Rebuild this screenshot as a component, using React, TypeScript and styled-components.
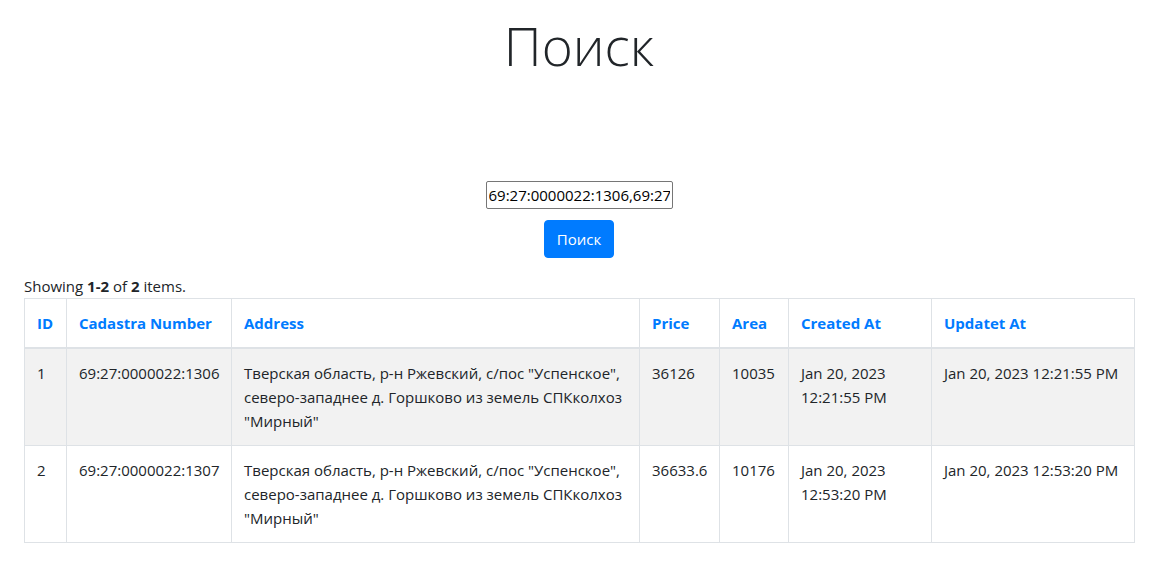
import React from "react";
import styled, { createGlobalStyle } from "styled-components";

const GlobalStyle = createGlobalStyle`
  html, body {
    margin: 0;
    padding: 0;
    background: #fff;
  }
  body {
    font-family: "Open Sans", "Noto Sans", sans-serif;
    font-size: 16px;
    line-height: 1.5;
    color: #212529;
  }
  * { box-sizing: border-box; }
`;

const Page = styled.div`
  padding: 0 32px 0 24px;
`;

const Title = styled.h1`
  margin: 0;
  padding-top: 14px;
  height: 78px;
  text-align: center;
  font-size: 53px;
  font-weight: 300;
  line-height: 64px;
  color: #212529;
`;

const SearchForm = styled.form`
  display: flex;
  flex-direction: column;
  align-items: center;
  gap: 11px;
  margin-top: 103px;
`;

const Input = styled.input`
  width: 187px;
  height: 28px;
  padding: 1px 2px;
  border: 1px solid #767676;
  border-radius: 2px;
  font-family: inherit;
  font-size: 15px;
  color: #000;
  outline: none;
`;

const Button = styled.button`
  height: 38px;
  padding: 6px 12px;
  background: #007bff;
  color: #fff;
  border: 1px solid #007bff;
  border-radius: 4px;
  font-family: inherit;
  font-size: 15px;
  line-height: 1.5;
  cursor: pointer;
`;

const Summary = styled.div`
  margin-top: 16px;
  font-size: 15px;
  line-height: 24px;
`;

const Table = styled.table`
  width: 1110px;
  border-collapse: collapse;
  table-layout: fixed;
  font-size: 15px;
`;

const Th = styled.th`
  padding: 12px;
  border: 1px solid #dee2e6;
  border-bottom: 2px solid #dee2e6;
  text-align: left;
  vertical-align: bottom;
  font-weight: 700;
  color: #007bff;
  line-height: 24px;
`;

const Row = styled.tr<{ $striped?: boolean }>`
  background: ${(p) => (p.$striped ? "#f2f2f2" : "#fff")};
`;

const Td = styled.td`
  padding: 12px;
  border: 1px solid #dee2e6;
  vertical-align: top;
  line-height: 24px;
`;

const widths = [42, 165, 408, 80, 69, 143, 203];
const headers = ["ID", "Cadastra Number", "Address", "Price", "Area", "Created At", "Updatet At"];

const address =
  'Тверская область, р-н Ржевский, с/пос "Успенское", северо-западнее д. Горшково из земель СПКколхоз "Мирный"';

const rows = [
  {
    id: "1",
    num: "69:27:0000022:1306",
    price: "36126",
    area: "10035",
    created: "Jan 20, 2023 12:21:55 PM",
    updated: "Jan 20, 2023 12:21:55 PM",
  },
  {
    id: "2",
    num: "69:27:0000022:1307",
    price: "36633.6",
    area: "10176",
    created: "Jan 20, 2023 12:53:20 PM",
    updated: "Jan 20, 2023 12:53:20 PM",
  },
];

export default function App() {
  return (
    <>
      <GlobalStyle />
      <Page>
        <Title>Поиск</Title>
        <SearchForm onSubmit={(e) => e.preventDefault()}>
          <Input type="text" defaultValue="69:27:0000022:1306,69:27:0000022:1307" />
          <Button type="submit">Поиск</Button>
        </SearchForm>
        <Summary>
          Showing <b>1-2</b> of <b>2</b> items.
        </Summary>
        <Table>
          <colgroup>
            {widths.map((w, i) => (
              <col key={i} style={{ width: w }} />
            ))}
          </colgroup>
          <thead>
            <tr>
              {headers.map((h) => (
                <Th key={h}>{h}</Th>
              ))}
            </tr>
          </thead>
          <tbody>
            {rows.map((r, i) => (
              <Row key={r.id} $striped={i % 2 === 0}>
                <Td>{r.id}</Td>
                <Td>{r.num}</Td>
                <Td>{address}</Td>
                <Td>{r.price}</Td>
                <Td>{r.area}</Td>
                <Td>{r.created}</Td>
                <Td>{r.updated}</Td>
              </Row>
            ))}
          </tbody>
        </Table>
      </Page>
    </>
  );
}
